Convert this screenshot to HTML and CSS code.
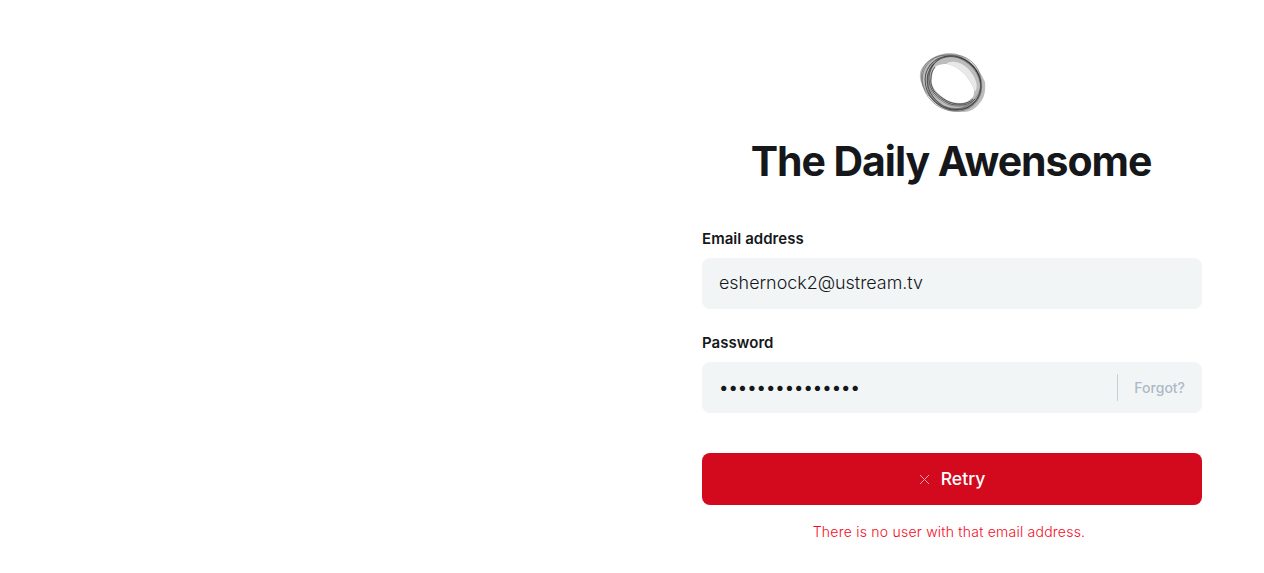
FILE: index.html
```html
<!DOCTYPE html>
<html lang="en">
<head>
  <meta charset="UTF-8" />
  <meta name="viewport" content="width=device-width, initial-scale=1.0" />
  <title>The Daily Awensome</title>
  <link rel="stylesheet" href="styles.css">
</head>
<body>
  <main class="signin">
    <header class="brand">
      <svg class="logo" width="68" height="62" viewBox="0 0 68 62" aria-hidden="true">
        <path class="logo-fill" fill-rule="evenodd" d="M2 22C4 12 18 2 32 2C46 2 60 14 67 31C68 40 66 46 64 49C58 58 52 61 45 61C38 61 31 60 25 57C17 53 12 48 9 42C5 36 1 30 2 22ZM17 16C15 19 14 23 14 27C13 31 14 35 17 39C20 43 24 46 29 49C33 51 37 52 42 52C47 52 51 50 54 47C56 45 56 43 56 39C55 35 52 30 49 26C46 22 43 20 39 17C36 15 33 14 29 13C25 13 21 13 17 16Z"/>
        <path class="logo-light" d="M29 12C38 8 49 14 55 24C59 31 60 36 57 41C55 35 52 30 49 26C46 22 43 20 39 17C36 15 33 14 29 13Z"/>
        <ellipse class="logo-ring" cx="36" cy="31" rx="27" ry="27" transform="rotate(40 36 31)"/>
        <ellipse class="logo-ring" cx="34" cy="32" rx="31" ry="27" transform="rotate(35 34 32)"/>
        <ellipse class="logo-ring dark" cx="36" cy="32" rx="28" ry="25" transform="rotate(42 36 32)"/>
        <ellipse class="logo-ring dark" cx="35" cy="32" rx="29" ry="26" transform="rotate(38 35 32)"/>
        <ellipse class="logo-ring" cx="33" cy="31" rx="31" ry="25" transform="rotate(30 33 31)"/>
        <path class="logo-ring dark" d="M17 16C14 20 13 23 13 27C12 32 14 36 16 40C20 44 24 47 29 50C33 52 37 53 42 53C47 53 52 51 55 48"/>
        <path class="logo-ring" d="M14 14C11 19 10 24 10 29C10 34 12 39 15 43C19 47 24 50 29 53C34 55 39 56 44 55C49 55 54 53 58 49"/>
        <path class="logo-ring dark" d="M16 13C12 18 11 24 11 28C11 33 13 38 16 42C20 46 25 49 30 52C34 54 38 54 43 54C48 54 53 52 57 48"/>
      </svg>
      <h1>The Daily Awensome</h1>
    </header>

    <form class="form">
      <div class="field">
        <label for="email">Email address</label>
        <div class="input-box">
          <input id="email" type="text" value="eshernock2@ustream.tv" />
        </div>
      </div>
      <div class="field">
        <label for="password">Password</label>
        <div class="input-box">
          <input id="password" type="password" value="aaaaaaaaaaaaaaa" />
          <a class="forgot" href="#">Forgot?</a>
        </div>
      </div>
      <button class="retry" type="button">
        <svg width="11" height="11" viewBox="0 0 11 11" aria-hidden="true"><path d="M1 1l9 9M10 1l-9 9"/></svg>
        <span class="retry-label">Retry</span>
      </button>
      <p class="error">There is no user with that email address.</p>
    </form>
  </main>
</body>
</html>
```

FILE: styles.css
```css
* {
  box-sizing: border-box;
}
body {
  margin: 0;
  min-height: 100vh;
  display: flex;
  justify-content: flex-end;
  padding-right: 62px;
  background: #ffffff;
  color: #15171a;
  font-family: Inter, sans-serif;
}
.signin {
  width: 500px;
  padding-top: 51px;
}
.brand {
  display: flex;
  flex-direction: column;
  align-items: center;
}
.logo {
  display: block;
}
.logo-fill {
  fill: #bcbcbc;
}
.logo-light {
  fill: #e8e8e8;
}
.logo-ring {
  fill: none;
  stroke: #666;
  stroke-width: 0.8;
  opacity: 0.7;
}
.logo-ring.dark {
  stroke: #2a2a2a;
  stroke-width: 1;
}
h1 {
  margin: 21px 0 0;
  padding-right: 2px;
  font-size: 41px;
  line-height: 54px;
  font-weight: 700;
  letter-spacing: -1.05px;
  white-space: nowrap;
}
.form {
  margin-top: 41px;
}
.field {
  margin-bottom: 24px;
}
label {
  display: block;
  margin-bottom: 9px;
  font-size: 15px;
  line-height: 20px;
  font-weight: 600;
  letter-spacing: 0.05px;
}
.input-box {
  display: flex;
  align-items: center;
  height: 51px;
  padding: 0 17px;
  background: #f2f5f6;
  border-radius: 8px;
}
input {
  flex: 1;
  min-width: 0;
  height: 25px;
  margin-bottom: 2px;
  padding: 0;
  border: none;
  outline: none;
  background: none;
  color: #15171a;
  font-family: Inter, sans-serif;
  font-size: 17.9px;
  font-weight: 300;
}
input[type="password"] {
  height: 23px;
  font-size: 16.7px;
  font-weight: 400;
}
.forgot {
  padding-left: 16px;
  border-left: 1px solid #c8ced3;
  line-height: 27px;
  color: #aeb9c6;
  font-size: 14px;
  font-weight: 500;
  text-decoration: none;
}
.retry {
  display: flex;
  align-items: center;
  justify-content: center;
  gap: 11px;
  width: 100%;
  height: 52px;
  margin-top: 40px;
  border: none;
  border-radius: 8px;
  background: #d3091e;
  color: #ffffff;
  font-family: Inter, sans-serif;
  font-size: 17.6px;
  font-weight: 500;
}
.retry svg {
  fill: none;
  stroke: #f4a3ab;
  stroke-width: 1;
}
.retry-label {
  padding-bottom: 2px;
}
.error {
  margin: 17px 0 0;
  padding-right: 6px;
  text-align: center;
  color: #f50b23;
  font-size: 14px;
  line-height: 20px;
  font-weight: 300;
  letter-spacing: 0.23px;
}
```
